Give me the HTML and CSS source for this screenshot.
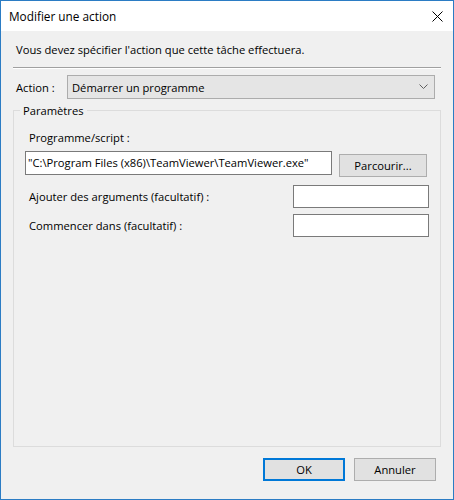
FILE: index.html
```html
<html>
	<head>
		<link rel="stylesheet" href="styles.css">
	</head>
	<body>
		<div class="window">
			<div class="titleBar">
				<div class="title">Modifier une action</div>
				<svg class="close" width="11" height="11" viewBox="0 0 11 11">
					<path d="M0.5 0.5 L10.5 10.5 M10.5 0.5 L0.5 10.5" stroke="#000" stroke-width="1" fill="none"/>
				</svg>
			</div>
			<div class="content">
				<div class="intro">Vous devez spécifier l'action que cette tâche effectuera.</div>
				<div class="separator"></div>
				<div class="actionRow">
					<div class="actionLabel">Action :</div>
					<div class="select">
						<span>Démarrer un programme</span>
						<svg width="9" height="6" viewBox="0 0 9 6">
							<path d="M0.5 0.5 L4.5 4.5 L8.5 0.5" stroke="#606060" stroke-width="1" fill="none"/>
						</svg>
					</div>
				</div>
				<div class="group">
					<div class="legend">Paramètres</div>
					<div class="fieldLabel">Programme/script :</div>
					<div class="programRow">
						<div class="input wide">"C:\Program Files (x86)\TeamViewer\TeamViewer.exe"</div>
						<div class="button browse">Parcourir...</div>
					</div>
					<div class="optRow first">
						<div class="optLabel">Ajouter des arguments (facultatif) :</div>
						<div class="input small"></div>
					</div>
					<div class="optRow">
						<div class="optLabel">Commencer dans (facultatif) :</div>
						<div class="input small"></div>
					</div>
				</div>
				<div class="footer">
					<div class="button ok">OK</div>
					<div class="button">Annuler</div>
				</div>
			</div>
		</div>
	</body>
</html>
```

FILE: styles.css
```css
html, body {
	margin: 0;
	padding: 0;
	width: 100%;
	height: 100%;
	background: #f0f0f0;
}

.window {
	box-sizing: border-box;
	width: 454px;
	height: 500px;
	border: 1px solid #2b7cc4;
	display: flex;
	flex-direction: column;
	font-family: "Open Sans", "Noto Sans", sans-serif;
	font-size: 11.2px;
	color: #000;
}

.titleBar {
	height: 30px;
	background: #fff;
	display: flex;
	align-items: center;
	justify-content: space-between;
	padding: 0 10px 0 8px;
}

.title {
	font-size: 11.8px;
}

.content {
	flex: 1;
	display: flex;
	flex-direction: column;
	padding: 0 12px 0 12px;
}

.intro {
	margin: 10px 0 0 3px;
	height: 17px;
	line-height: 17px;
}

.separator {
	margin-top: 9px;
	height: 1px;
	background: #a0a0a0;
	border-bottom: 1px solid #fff;
}

.actionRow {
	display: flex;
	align-items: center;
	margin-top: 6px;
}

.actionLabel {
	width: 54px;
	padding-left: 3px;
	box-sizing: border-box;
}

.select {
	box-sizing: border-box;
	width: 368px;
	height: 24px;
	background: #e5e5e5;
	border: 1px solid #acacac;
	display: flex;
	align-items: center;
	justify-content: space-between;
	padding: 0 6px 0 4px;
}

.group {
	position: relative;
	box-sizing: border-box;
	height: 337px;
	margin-top: 11px;
	border: 1px solid #dcdcdc;
	padding: 0 0 0 11px;
}

.legend {
	position: absolute;
	top: -9px;
	left: 6px;
	padding: 0 3px;
	background: #f0f0f0;
	line-height: 17px;
}

.fieldLabel {
	margin: 18px 0 0 4px;
	line-height: 17px;
}

.programRow {
	display: flex;
	align-items: flex-start;
	margin-top: 5px;
}

.input {
	box-sizing: border-box;
	background: #fff;
	border: 1px solid #7a7a7a;
	height: 24px;
	line-height: 22px;
	padding: 0 2px;
	white-space: nowrap;
	overflow: hidden;
}

.wide {
	width: 307px;
}

.button {
	box-sizing: border-box;
	width: 82px;
	height: 23px;
	line-height: 21px;
	text-align: center;
	background: #e1e1e1;
	border: 1px solid #adadad;
}

.browse {
	width: 88px;
	margin: 3px 0 0 7px;
}

.optRow {
	display: flex;
	align-items: center;
	justify-content: space-between;
	width: 404px;
	margin-top: 6px;
}

.optRow.first {
	margin-top: 8px;
}

.optLabel {
	padding-left: 4px;
}

.small {
	width: 136px;
	height: 23px;
}

.footer {
	display: flex;
	justify-content: flex-end;
	gap: 9px;
	margin-top: 11px;
	padding-right: 5px;
}

.ok {
	border: 2px solid #0078d7;
	line-height: 19px;
}
```
